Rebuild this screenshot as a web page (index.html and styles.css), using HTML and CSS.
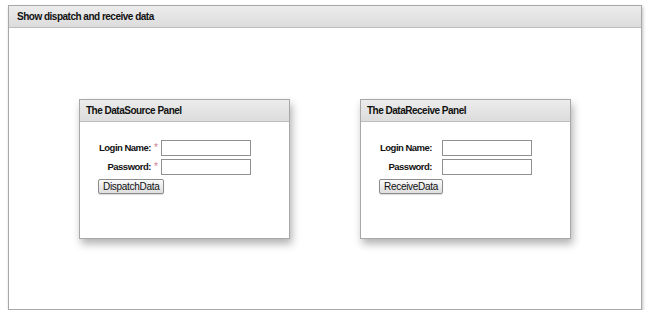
FILE: index.html
```html
<!DOCTYPE html>
<html lang="en">
<head>
  <meta charset="UTF-8">
  <title>Show dispatch and receive data</title>
  <link rel="stylesheet" href="styles.css">
</head>
<body>
  <div class="main-panel">
    <div class="main-header">Show dispatch and receive data</div>
    <div class="main-body">
      <div class="panel">
        <div class="panel-header">The DataSource Panel</div>
        <div class="panel-body">
          <div class="form">
            <label>Login Name:</label><span class="req">*</span><input type="text">
            <label>Password:</label><span class="req">*</span><input type="password">
          </div>
          <button>DispatchData</button>
        </div>
      </div>
      <div class="panel">
        <div class="panel-header">The DataReceive Panel</div>
        <div class="panel-body">
          <div class="form">
            <label>Login Name:</label><span class="req"></span><input type="text">
            <label>Password:</label><span class="req"></span><input type="password">
          </div>
          <button>ReceiveData</button>
        </div>
      </div>
    </div>
  </div>
</body>
</html>
```

FILE: styles.css
```css
body {
  margin: 0;
  padding: 5px 8px 0 8px;
  background: #fff;
  font-family: 'Liberation Sans', Arial, sans-serif;
  font-size: 11px;
  color: #111;
}
.main-panel {
  width: 632px;
  height: 303px;
  border: 1px solid #a8a8a8;
  background: #fff;
  box-shadow: 1px 2px 3px rgba(0,0,0,0.25);
  display: flex;
  flex-direction: column;
}
.main-header {
  height: 21px;
  line-height: 21px;
  padding-left: 8px;
  font-weight: bold;
  font-size: 10px;
  letter-spacing: -0.5px;
  background: linear-gradient(#ececec, #dcdcdc);
  border-bottom: 1px solid #bdbdbd;
}
.main-body {
  flex: 1;
  display: flex;
  justify-content: space-evenly;
  align-items: center;
}
.panel {
  width: 209px;
  height: 138px;
  border: 1px solid #a8a8a8;
  background: #fff;
  box-shadow: 2px 5px 8px rgba(0,0,0,0.3);
  display: flex;
  flex-direction: column;
}
.panel-header {
  height: 21px;
  line-height: 21px;
  padding-left: 6px;
  font-weight: bold;
  font-size: 10px;
  letter-spacing: -0.5px;
  background: linear-gradient(#ececec, #dcdcdc);
  border-bottom: 1px solid #bdbdbd;
}
.panel-body {
  padding: 18px 0 0 18px;
}
.form {
  display: grid;
  grid-template-columns: 53px 10px 90px;
  row-gap: 3px;
  align-items: center;
}
.form label {
  font-weight: bold;
  font-size: 9.5px;
  letter-spacing: -0.5px;
  text-align: right;
  white-space: nowrap;
}
.req {
  color: #d08090;
  font-size: 10px;
  text-align: center;
}
.form input {
  width: 90px;
  height: 16px;
  box-sizing: border-box;
  border: 1px solid #909090;
  margin: 0;
  padding: 0;
}
button {
  margin-top: 4px;
  height: 15px;
  padding: 0 4px;
  font-family: 'Liberation Sans', Arial, sans-serif;
  font-size: 10px;
  letter-spacing: -0.3px;
  color: #111;
  border: 1px solid #8c8c8c;
  border-radius: 2px;
  background: linear-gradient(#fafafa, #dedede);
  box-shadow: 0 1px 1px rgba(0,0,0,0.15);
}
```
